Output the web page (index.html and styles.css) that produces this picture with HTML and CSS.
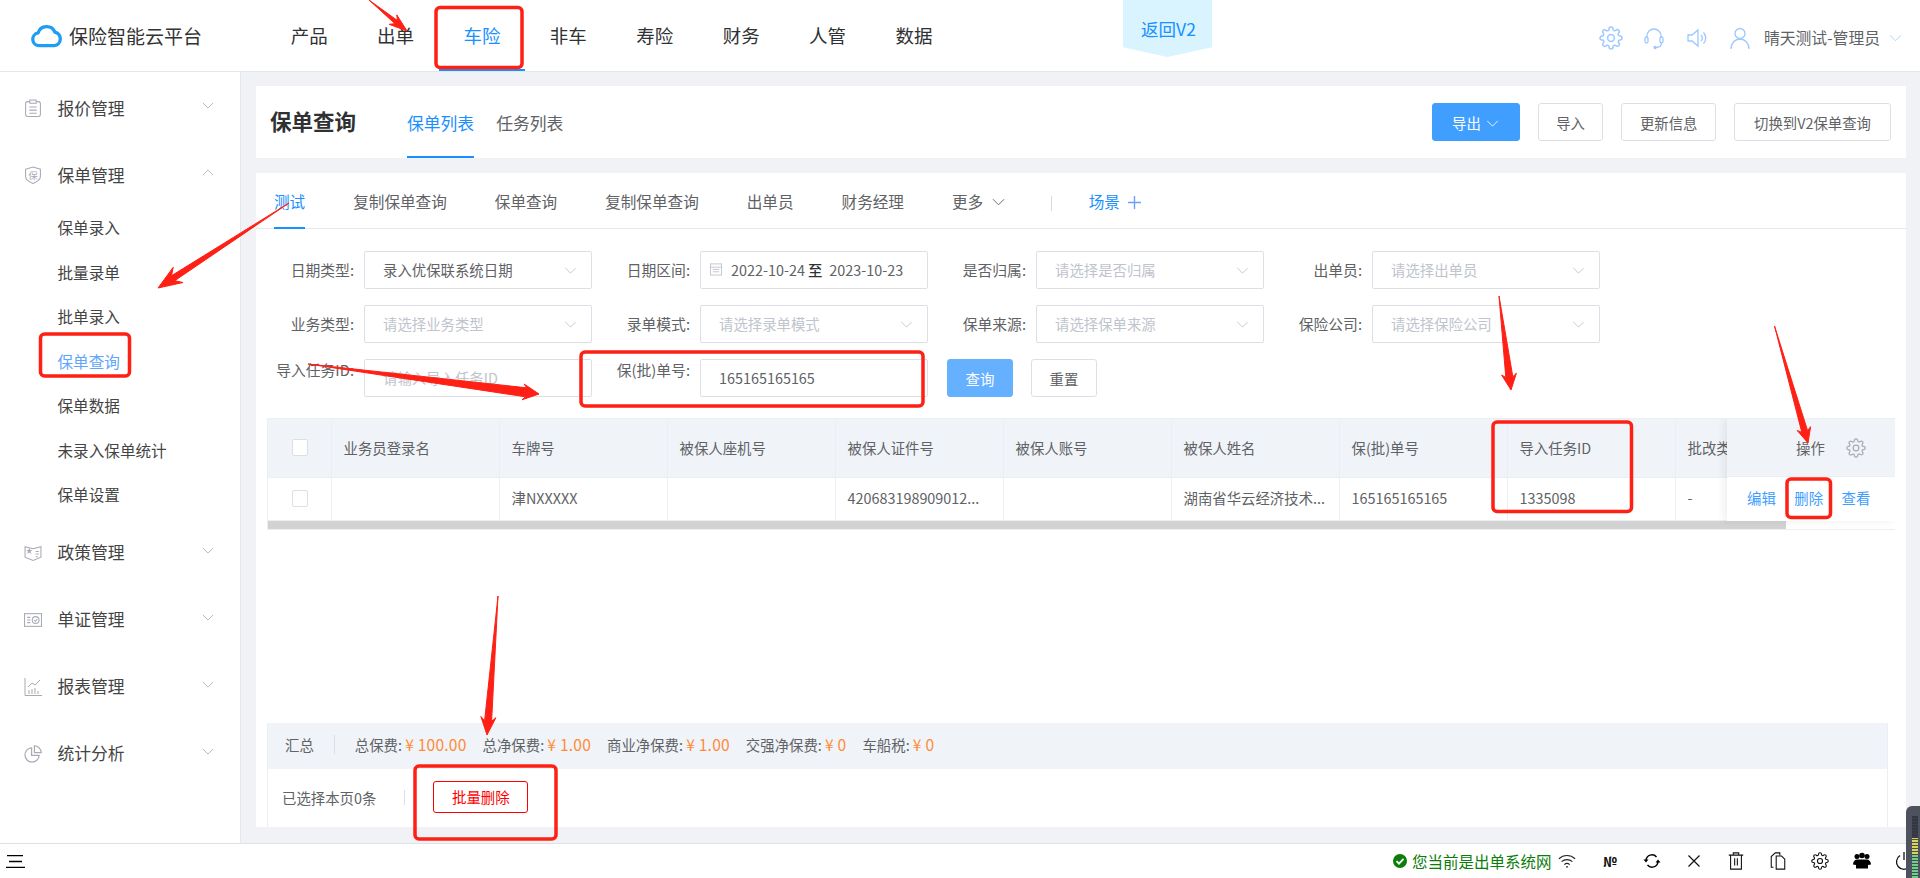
FILE: index.html
```html
<!DOCTYPE html>
<html lang="zh-CN">
<head>
  <meta charset="UTF-8">
  <title>保险智能云平台</title>
  <link rel="stylesheet" href="styles.css">
</head>
<body>
  <!-- shared icons -->
  <svg class="sprite" xmlns="http://www.w3.org/2000/svg">
    <symbol id="chev" viewBox="0 0 14 8"><polyline points="1,1 7,7 13,1" fill="none" stroke="currentColor"/></symbol>
    <symbol id="gear" viewBox="0 0 24 24"><g fill="none" stroke="currentColor" stroke-width="1.5"><circle cx="12" cy="12" r="3.4"/><path d="M19.4 15a1.65 1.65 0 0 0 .33 1.82l.06.06a2 2 0 0 1 0 2.83 2 2 0 0 1-2.83 0l-.06-.06a1.65 1.65 0 0 0-1.82-.33 1.65 1.65 0 0 0-1 1.51V21a2 2 0 0 1-2 2 2 2 0 0 1-2-2v-.09A1.65 1.65 0 0 0 9 19.4a1.65 1.65 0 0 0-1.82.33l-.06.06a2 2 0 0 1-2.83 0 2 2 0 0 1 0-2.83l.06-.06a1.65 1.65 0 0 0 .33-1.82 1.65 1.65 0 0 0-1.51-1H3a2 2 0 0 1-2-2 2 2 0 0 1 2-2h.09A1.65 1.65 0 0 0 4.6 9a1.65 1.65 0 0 0-.33-1.82l-.06-.06a2 2 0 0 1 0-2.83 2 2 0 0 1 2.83 0l.06.06a1.65 1.65 0 0 0 1.82.33H9a1.65 1.65 0 0 0 1-1.51V3a2 2 0 0 1 2-2 2 2 0 0 1 2 2v.09a1.65 1.65 0 0 0 1 1.51 1.65 1.65 0 0 0 1.82-.33l.06-.06a2 2 0 0 1 2.83 0 2 2 0 0 1 0 2.83l-.06.06a1.65 1.65 0 0 0-.33 1.82V9a1.65 1.65 0 0 0 1.51 1H21a2 2 0 0 1 2 2 2 2 0 0 1-2 2h-.09a1.65 1.65 0 0 0-1.51 1z"/></g></symbol>
  </svg>

  <!-- top nav -->
  <header class="topbar">
    <div class="logo">
      <svg class="logo-icon" viewBox="0 0 32 25"><path d="M8.5 23a6.6 6.6 0 0 1-1.2-13.1A9.2 9.2 0 0 1 24.6 9a7.1 7.1 0 0 1-.6 14z" fill="none" stroke="#1e9df5" stroke-width="3.4" stroke-linejoin="round"/></svg>
      <span>保险智能云平台</span>
    </div>
    <nav class="mainnav">
      <a href="#">产品</a>
      <a href="#">出单</a>
      <a href="#" class="active">车险</a>
      <a href="#">非车</a>
      <a href="#">寿险</a>
      <a href="#">财务</a>
      <a href="#">人管</a>
      <a href="#">数据</a>
    </nav>
    <a href="#" class="back-v2">返回V2</a>
    <div class="tools">
      <svg class="tool-icon"><use href="#gear"/></svg>
      <svg class="tool-icon" viewBox="0 0 24 24" fill="none" stroke="currentColor" stroke-width="1.3"><path d="M5 12V10a7 7 0 0 1 14 0v2"/><rect x="3" y="11" width="3" height="6" rx="1.5"/><rect x="18" y="11" width="3" height="6" rx="1.5"/><path d="M19.5 17c0 3-2.5 4.5-5.5 4.5"/><circle cx="13" cy="21.5" r="1" fill="currentColor"/></svg>
      <svg class="tool-icon" viewBox="0 0 24 24" fill="none" stroke="currentColor" stroke-width="1.3"><path d="M3 9h4l6-5v16l-6-5H3z"/><path d="M16 9a4 4 0 0 1 0 6"/><path d="M18.5 6.500a8 8 0 0 1 0 11"/></svg>
      <svg class="tool-icon" viewBox="0 0 24 24" fill="none" stroke="currentColor" stroke-width="1.3"><circle cx="12" cy="7.500" r="5"/><path d="M3 23c0-6 4-10 9-10s9 4 9 10"/></svg>
      <span class="user-name">晴天测试-管理员</span>
      <svg class="user-chev"><use href="#chev"/></svg>
    </div>
  </header>

  <div class="layout">
    <!-- left menu -->
    <aside class="sidebar">
      <a href="#" class="menu-title">
        <svg class="menu-icon" viewBox="0 0 16 17" fill="none" stroke="currentColor"><rect x="1" y="2.500" width="14" height="14" rx="2"/><rect x="5" y="1" width="6" height="3" fill="#fff"/><path d="M4.500 7.500h7M4.500 10.500h7M4.500 13.500h7"/></svg>
        <span>报价管理</span>
        <svg class="menu-chev"><use href="#chev"/></svg>
      </a>
      <a href="#" class="menu-title">
        <svg class="menu-icon" viewBox="0 0 16 17" fill="none" stroke="currentColor"><path d="M1 3l7-2 7 2v7c0 3-3 5-7 6.500C4 15 1 13 1 10z"/><text x="8" y="12" font-size="9" text-anchor="middle" fill="currentColor" stroke="none">保</text></svg>
        <span>保单管理</span>
        <svg class="menu-chev flip"><use href="#chev"/></svg>
      </a>
      <div class="submenu">
        <a href="#">保单录入</a>
        <a href="#">批量录单</a>
        <a href="#">批单录入</a>
        <a href="#" class="current">保单查询</a>
        <a href="#">保单数据</a>
        <a href="#">未录入保单统计</a>
        <a href="#">保单设置</a>
      </div>
      <a href="#" class="menu-title">
        <svg class="menu-icon" viewBox="0 0 17 16" fill="none" stroke="currentColor"><path d="M1 2l7.500 2L16 2v10l-7.500 3L1 12z"/><path d="M4 7.500l1-.6 1 .6-.4-1.100.9-.8H5.400L5 4.500l-.4 1.100H3.500l.9.8zM11 6.500h3M11 9h3M11 11.500h2"/></svg>
        <span>政策管理</span>
        <svg class="menu-chev"><use href="#chev"/></svg>
      </a>
      <a href="#" class="menu-title">
        <svg class="menu-icon" viewBox="0 0 17 13" fill="none" stroke="currentColor"><rect x=".5" y=".5" width="16" height="12"/><path d="M3 4h3M3 6.500h3M3 9h3"/><circle cx="11" cy="6.500" r="3.200"/><path d="M9.500 6.500l1.200 1.200 2-2"/></svg>
        <span>单证管理</span>
        <svg class="menu-chev"><use href="#chev"/></svg>
      </a>
      <a href="#" class="menu-title">
        <svg class="menu-icon" viewBox="0 0 18 18" fill="none" stroke="currentColor"><path d="M1 0v17.500h17"/><path d="M4 9l4-4 3 2 5-5"/><path d="M5 16v-4M8 16v-5M11 16v-6M14 16v-3"/></svg>
        <span>报表管理</span>
        <svg class="menu-chev"><use href="#chev"/></svg>
      </a>
      <a href="#" class="menu-title">
        <svg class="menu-icon" viewBox="0 0 19 19" fill="none" stroke="currentColor" stroke-width="1.300"><path d="M8 3a7.500 7.500 0 1 0 8 8H8z"/><path d="M11 .8a7.500 7.500 0 0 1 7.200 7.200H11z"/></svg>
        <span>统计分析</span>
        <svg class="menu-chev"><use href="#chev"/></svg>
      </a>
    </aside>

    <main class="content">
      <!-- title card -->
      <section class="title-card">
        <h1>保单查询</h1>
        <div class="page-tabs">
          <a href="#" class="active">保单列表</a>
          <a href="#">任务列表</a>
        </div>
        <div class="page-actions">
          <button class="btn btn-primary">导出 <svg class="btn-chev"><use href="#chev"/></svg></button>
          <button class="btn">导入</button>
          <button class="btn">更新信息</button>
          <button class="btn btn-wide">切换到V2保单查询</button>
        </div>
      </section>

      <section class="query-card">
        <!-- scene tabs -->
        <div class="scene-tabs">
          <a href="#" class="active">测试</a>
          <a href="#">复制保单查询</a>
          <a href="#">保单查询</a>
          <a href="#">复制保单查询</a>
          <a href="#">出单员</a>
          <a href="#">财务经理</a>
          <a href="#" class="more">更多 <svg class="more-chev"><use href="#chev"/></svg></a>
          <span class="scene-sep"></span>
          <a href="#" class="scene-add">场景<svg class="plus" viewBox="0 0 13 13" stroke="currentColor" stroke-width="1.400"><path d="M6.500 0v13M0 6.500h13"/></svg></a>
        </div>

        <!-- filters -->
        <div class="filters">
          <div class="field"><label>日期类型:</label><div class="control has-value">录入优保联系统日期<svg class="select-chev"><use href="#chev"/></svg></div></div>
          <div class="field"><label>日期区间:</label>
            <div class="control has-value date-range">
              <svg class="date-icon" viewBox="0 0 13 14" fill="none" stroke="currentColor"><rect x=".5" y="1.500" width="12" height="12"/><path d="M.5 5h12M3 7.500h7M3 10h7"/></svg>
              <span>2022-10-24</span><b>至</b><span>2023-10-23</span>
            </div>
          </div>
          <div class="field"><label>是否归属:</label><div class="control">请选择是否归属<svg class="select-chev"><use href="#chev"/></svg></div></div>
          <div class="field"><label>出单员:</label><div class="control">请选择出单员<svg class="select-chev"><use href="#chev"/></svg></div></div>

          <div class="field"><label>业务类型:</label><div class="control">请选择业务类型<svg class="select-chev"><use href="#chev"/></svg></div></div>
          <div class="field"><label>录单模式:</label><div class="control">请选择录单模式<svg class="select-chev"><use href="#chev"/></svg></div></div>
          <div class="field"><label>保单来源:</label><div class="control">请选择保单来源<svg class="select-chev"><use href="#chev"/></svg></div></div>
          <div class="field"><label>保险公司:</label><div class="control">请选择保险公司<svg class="select-chev"><use href="#chev"/></svg></div></div>

          <div class="field field-top"><label>导入任务ID:</label><div class="control">请输入导入任务ID</div></div>
          <div class="field field-top"><label>保(批)单号:</label><div class="control has-value">165165165165</div></div>
          <div class="field-buttons">
            <button class="btn btn-light">查询</button>
            <button class="btn">重置</button>
          </div>
        </div>

        <!-- result table -->
        <div class="table-wrap">
          <table class="result-table">
            <colgroup>
              <col class="col-check">
              <col span="9" class="col-data">
            </colgroup>
            <thead>
              <tr>
                <th><span class="checkbox"></span></th>
                <th>业务员登录名</th>
                <th>车牌号</th>
                <th>被保人座机号</th>
                <th>被保人证件号</th>
                <th>被保人账号</th>
                <th>被保人姓名</th>
                <th>保(批)单号</th>
                <th>导入任务ID</th>
                <th>批改类型</th>
              </tr>
            </thead>
            <tbody>
              <tr>
                <td><span class="checkbox"></span></td>
                <td></td>
                <td>津NXXXXX</td>
                <td></td>
                <td>420683198909012...</td>
                <td></td>
                <td>湖南省华云经济技术...</td>
                <td>165165165165</td>
                <td>1335098</td>
                <td>-</td>
              </tr>
            </tbody>
          </table>
          <div class="table-thumb"></div>
          <!-- fixed action column sits over the scrolled table -->
          <div class="fixed-col">
            <div class="fixed-head">操作<svg class="fixed-gear"><use href="#gear"/></svg></div>
            <div class="fixed-row"><a href="#">编辑</a><a href="#">删除</a><a href="#">查看</a></div>
          </div>
        </div>

        <!-- totals and batch bar -->
        <div class="table-foot">
          <div class="totals">
            <span class="totals-title">汇总</span>
            <span>总保费: <em>¥ 100.00</em></span>
            <span>总净保费: <em>¥ 1.00</em></span>
            <span>商业净保费: <em>¥ 1.00</em></span>
            <span>交强净保费: <em>¥ 0</em></span>
            <span>车船税: <em>¥ 0</em></span>
          </div>
          <div class="batch">
            <span class="batch-count">已选择本页0条</span>
            <button class="btn-danger">批量删除</button>
          </div>
        </div>
      </section>
    </main>
  </div>

  <!-- bottom status bar -->
  <footer class="statusbar">
    <svg class="burger" viewBox="0 0 19 13" stroke="#000" stroke-width="1.300"><path d="M1 .7h16M3 6.500h13M0 12.300h19"/></svg>
    <div class="status-right">
      <svg class="ok-icon" viewBox="0 0 14 14"><circle cx="7" cy="7" r="7" fill="#0a7d0a"/><path d="M3.500 7.200l2.500 2.400 4.500-4.800" fill="none" stroke="#fff" stroke-width="1.800"/></svg>
      <span class="status-text">您当前是出单系统网</span>
      <svg class="st-icon wifi" viewBox="0 0 20 16" fill="none" stroke="#222" stroke-width="1.200"><path d="M1 5.500a13 13 0 0 1 18 0M4 8.800a9 9 0 0 1 12 0M7 12a4.500 4.500 0 0 1 6 0"/><circle cx="10" cy="14.500" r="1" fill="#222" stroke="none"/></svg>
      <span class="st-icon st-no">№</span>
      <svg class="st-icon" viewBox="0 0 18 18" fill="none" stroke="#000" stroke-width="1.500"><path d="M3 8a6 6 0 0 1 10.500-3M15 10A6 6 0 0 1 4.500 13"/><path d="M.5 7.500h5L3 10.500zM17.500 10.500h-5L15 7.500z" fill="#000" stroke="none"/></svg>
      <svg class="st-icon" viewBox="0 0 18 18" stroke="#111" stroke-width="1.200"><path d="M3.500 3.500l11 11M14.500 3.500l-11 11"/></svg>
      <svg class="st-icon" viewBox="0 0 18 20" fill="none" stroke="#111" stroke-width="1.200"><path d="M1 3.500h16M6 3.500V1h6v2.500M3 3.500V19h12V3.500M7.500 7v8M10.500 7v8"/></svg>
      <svg class="st-icon" viewBox="0 0 18 20" fill="none" stroke="#111" stroke-width="1.200"><path d="M4 17H1.500V5L6 1h5v3"/><path d="M7 4.500h6l3.500 3.500v11H7z"/></svg>
      <svg class="st-icon st-gear"><use href="#gear"/></svg>
      <svg class="st-icon" viewBox="0 0 18 17" fill="#000"><circle cx="4" cy="4" r="2.500"/><circle cx="14" cy="4" r="2.500"/><circle cx="9" cy="3" r="2.800"/><path d="M0 12c0-3 2-5 4-5h10c2 0 4 2 4 5l-3 .5V16H3v-3.500z"/></svg>
      <svg class="st-icon" viewBox="0 0 18 18" fill="none" stroke="#111" stroke-width="1.300"><path d="M5 3.500a7.500 7.500 0 1 0 8 0M9 0v8"/></svg>
    </div>
  </footer>

  <!-- desktop level meter peeking in at the corner -->
  <div class="meter"><div class="meter-bars"></div></div>

  <!-- red review marks drawn over the screenshot -->
  <svg class="marks" viewBox="0 0 1920 878">
    <g fill="none" stroke="#fe2015" stroke-width="3.500">
      <rect x="436" y="7.500" width="86" height="60" rx="4"/>
      <rect x="40.500" y="334" width="89" height="42" rx="4"/>
      <rect x="581" y="352" width="342" height="54" rx="4"/>
      <rect x="1493" y="422" width="138.500" height="89.500" rx="4"/>
      <rect x="1787" y="479" width="43.500" height="38.500" rx="4"/>
      <rect x="415" y="766" width="141" height="73" rx="4"/>
    </g>
    <g fill="#fe2015" stroke="#fe2015">
      <polygon points="369,0 395,23.700 389.200,24.300 407,31 396.800,14.900 397.400,20.500"/>
      <polygon points="289,203 171.500,275.700 173.200,267.300 158,288 183,282.500 174.700,280.700"/>
      <polygon points="308,364 525.500,396.800 522,399.800 539,394 524.100,384 526.700,387.800"/>
      <polygon points="1499,296 1505.800,377.500 1501.600,375 1511,390 1516.400,373.200 1512.800,376.700"/>
      <polygon points="1774.500,326 1801.800,432.300 1797.200,430.500 1808,443 1810.600,426.700 1807.600,430.700"/>
      <polygon points="498,596 484.600,720.700 480.900,716.500 487,735 495.900,717.700 491.600,721.300"/>
    </g>
  </svg>
</body>
</html>
```

FILE: styles.css
```css
* {
  box-sizing: border-box;
}

html, body {
  margin: 0;
  height: 878px;
  overflow: hidden;
}

body {
  position: relative;
  display: flex;
  flex-direction: column;
  font-family: "Noto Sans CJK SC", "Liberation Sans", sans-serif;
  font-size: 14.4px;
  color: #606266;
  background: #f0f2f5;
}

a {
  color: inherit;
  text-decoration: none;
}

button {
  font-family: inherit;
  cursor: pointer;
}

.sprite {
  display: none;
}

/* top nav */
.topbar {
  position: relative;
  flex: none;
  height: 72px;
  display: flex;
  background: #fff;
  border-bottom: 1px solid #e4e7ed;
}

.logo {
  width: 266px;
  padding-left: 31px;
  display: flex;
  align-items: center;
  gap: 7px;
  font-size: 19px;
  color: #333;
}

.logo-icon {
  width: 31px;
  height: 25px;
}

.mainnav {
  display: flex;
}

.mainnav a {
  width: 86.4px;
  text-align: center;
  line-height: 71px;
  font-size: 18.5px;
  color: #303133;
}

.mainnav a.active {
  color: #1890ff;
  border-bottom: 2px solid #1890ff;
}

.back-v2 {
  position: absolute;
  left: 1123px;
  top: 0;
  width: 89px;
  height: 57px;
  padding: 16px 0 0 2px;
  text-align: center;
  font-size: 17.5px;
  line-height: 26px;
  color: #1890ff;
  background: #d9f4ff;
  clip-path: polygon(0 0, 100% 0, 100% 83%, 50% 100%, 0 83%);
}

.tools {
  margin-left: auto;
  padding: 4px 18px 0 0;
  display: flex;
  align-items: center;
}

.tool-icon {
  width: 24px;
  height: 24px;
  margin-right: 19px;
  color: #9cc8ff;
}

.tool-icon:nth-of-type(4) {
  margin-right: 12px;
}

.user-name {
  font-size: 15.8px;
  color: #606266;
}

.user-chev {
  width: 13px;
  height: 8px;
  margin-left: 9px;
  color: #a9cfff;
}

.layout {
  flex: 1;
  min-height: 0;
  display: flex;
}

/* left menu */
.sidebar {
  flex: none;
  width: 241px;
  padding-top: 2px;
  background: #fff;
  border-right: 1px solid #e4e7ed;
}

.menu-title {
  position: relative;
  height: 67px;
  padding-left: 57.5px;
  display: flex;
  align-items: center;
  font-size: 16.8px;
  color: #444;
}

.menu-icon {
  position: absolute;
  left: 24px;
  top: 25px;
  width: 18px;
  height: 18px;
  color: #a7abb4;
}

.menu-chev {
  position: absolute;
  left: 202px;
  top: 28px;
  width: 12px;
  height: 7px;
  color: #a9b0ba;
}

.menu-chev.flip {
  transform: rotate(180deg);
}

.submenu {
  margin: -3px 0 2px;
}

.submenu a {
  height: 44.5px;
  padding-left: 57.5px;
  display: flex;
  align-items: center;
  font-size: 15.6px;
  color: #444;
}

.submenu a.current {
  color: #5ea6ff;
}

/* main area */
.content {
  flex: 1;
  min-width: 0;
  padding: 14px 14px 16px 15px;
  display: flex;
  flex-direction: column;
  gap: 15px;
}

.title-card {
  flex: none;
  height: 72px;
  padding: 0 15px 0 14px;
  display: flex;
  align-items: stretch;
  background: #fff;
}

.title-card h1 {
  margin: 0 51px 0 0;
  font-size: 21.5px;
  line-height: 70px;
  color: #303133;
}

.page-tabs {
  display: flex;
  gap: 22px;
}

.page-tabs a {
  padding-top: 22px;
  font-size: 16.8px;
  line-height: 30px;
  color: #606266;
}

.page-tabs a.active {
  color: #1890ff;
  border-bottom: 2px solid #1890ff;
}

.page-actions {
  margin-left: auto;
  display: flex;
  align-items: center;
  gap: 18px;
}

.btn {
  height: 38px;
  padding: 0 17.5px;
  font-size: 14.4px;
  color: #606266;
  background: #fff;
  border: 1px solid #dcdfe6;
  border-radius: 3px;
}

.btn-wide {
  padding: 0 19px;
}

.btn-primary {
  width: 88px;
  padding: 0;
  color: #fff;
  background: #409eff;
  border-color: #409eff;
}

.btn-light {
  color: #fff;
  background: #66b1ff;
  border-color: #66b1ff;
}

.btn-chev {
  width: 13px;
  height: 7px;
  margin-left: 2px;
  vertical-align: 2px;
  color: #fff;
}

/* scene tabs */
.query-card {
  flex: 1;
  min-height: 0;
  display: flex;
  flex-direction: column;
  background: #fff;
}

.scene-tabs {
  flex: none;
  height: 56px;
  padding-left: 18px;
  display: flex;
  align-items: stretch;
  gap: 48px;
  font-size: 15.6px;
  border-bottom: 1px solid #e4e7ed;
}

.scene-tabs a {
  line-height: 57px;
}

.scene-tabs a.active {
  color: #1890ff;
  border-bottom: 2px solid #1890ff;
  height: 56px;
}

.more-chev {
  width: 13px;
  height: 8px;
  margin-left: 5px;
  vertical-align: 2px;
  color: #606266;
}

.scene-sep {
  width: 1px;
  height: 15px;
  margin: 23px 0 0 -2px;
  background: #d5d9e0;
}

.scene-tabs a.scene-add {
  color: #1890ff;
  margin-left: -11px;
}

.plus {
  width: 13px;
  height: 13px;
  margin-left: 8px;
  vertical-align: -1px;
  color: #6d9eff;
}

/* filters */
.filters {
  flex: none;
  padding-top: 22px;
  display: grid;
  grid-template-columns: repeat(4, 336px);
  grid-auto-rows: 38px;
  row-gap: 16px;
}

.field {
  display: flex;
  align-items: center;
}

.field label {
  width: 98px;
  margin-right: 10px;
  padding-bottom: 2px;
  flex: none;
  font-size: 14.8px;
  text-align: right;
  color: #606266;
  white-space: nowrap;
}

.field-top label {
  align-self: flex-start;
  padding-bottom: 0;
  line-height: 22px;
}

.control {
  position: relative;
  width: 228px;
  height: 38px;
  padding: 0 0 2px 18px;
  display: flex;
  align-items: center;
  color: #c0c4cc;
  border: 1px solid #dcdfe6;
  border-radius: 2px;
}

.control.has-value {
  color: #606266;
}

.select-chev {
  position: absolute;
  right: 14px;
  top: 15px;
  width: 13px;
  height: 7px;
  color: #c0c4cc;
}

.date-range {
  padding-left: 9px;
}

.date-icon {
  width: 12px;
  height: 14px;
  margin-right: 9px;
  color: #c0c4cc;
}

.date-range b {
  margin: 0 7px 0 3px;
  font-weight: 500;
  color: #303133;
}

.field-buttons {
  padding-left: 19px;
  display: flex;
  gap: 18px;
}

.field-buttons .btn {
  width: 66px;
  padding: 0;
}

/* table */
.table-wrap {
  position: relative;
  flex: none;
  width: 1628px;
  height: 112px;
  margin: 21px 0 0 11px;
  overflow: hidden;
  border: 1px solid #ebeef5;
  border-right: 0;
}

.result-table {
  width: 1575px;
  table-layout: fixed;
  border-collapse: collapse;
}

.col-check {
  width: 63px;
}

.col-data {
  width: 168px;
}

.result-table th,
.result-table td {
  padding: 0 12px;
  text-align: left;
  font-weight: 400;
  color: #606266;
  white-space: nowrap;
  overflow: hidden;
  border-right: 1px solid #ebeef5;
  border-bottom: 1px solid #ebeef5;
}

.result-table th {
  height: 58px;
  background: #f0f4f9;
}

.result-table td {
  height: 43px;
  padding-bottom: 2px;
}

.result-table th:first-child,
.result-table td:first-child {
  padding: 0 0 0 24px;
}

.checkbox {
  display: block;
  width: 16px;
  height: 17px;
  background: #fff;
  border: 1px solid #dcdfe6;
  border-radius: 2px;
}

.table-thumb {
  width: 1518px;
  height: 9px;
  background: #d2d2d2;
}

.fixed-col {
  position: absolute;
  right: 0;
  top: 0;
  width: 168px;
  height: 102px;
  background: #fff;
  box-shadow: -3px 0 8px rgba(0, 0, 0, .07);
}

.fixed-head {
  position: relative;
  height: 58px;
  line-height: 58px;
  padding-left: 69px;
  background: #f0f4f9;
  border-bottom: 1px solid #ebeef5;
}

.fixed-gear {
  position: absolute;
  left: 119px;
  top: 19px;
  width: 20px;
  height: 20px;
  color: #a7abb4;
}

.fixed-row {
  height: 43px;
  padding: 0 0 2px 20px;
  display: flex;
  align-items: center;
  gap: 18.5px;
  color: #409eff;
}

/* totals */
.table-foot {
  margin: auto 18px 0 11px;
  border-left: 1px solid #ebeef5;
  border-right: 1px solid #ebeef5;
}

.totals {
  height: 46px;
  padding: 0 0 4px 17px;
  display: flex;
  align-items: center;
  gap: 16px;
  background: #f0f4f9;
}

.totals em {
  font-style: normal;
  font-size: 15.6px;
  letter-spacing: .2px;
  color: #ff8c3a;
}

.totals-title {
  padding-right: 20px;
  margin-right: 4px;
  border-right: 1px solid #dcdfe6;
  line-height: 19px;
}

.batch {
  height: 58px;
  padding: 0 0 2px 14px;
  display: flex;
  align-items: center;
}

.batch-count {
  padding-right: 28px;
  border-right: 1px solid #dcdfe6;
  line-height: 15px;
}

.btn-danger {
  width: 95px;
  height: 32px;
  margin-left: 28px;
  padding-bottom: 3px;
  font-size: 14.4px;
  color: #f00;
  background: #fff;
  border: 1px solid #f00;
  border-radius: 3px;
}

/* status bar */
.statusbar {
  flex: none;
  height: 35px;
  padding: 0 7px 0 6px;
  display: flex;
  align-items: center;
  background: #fff;
  border-top: 1px solid #dfe1e5;
}

.burger {
  width: 19px;
  height: 13px;
}

.status-right {
  margin-left: auto;
  display: flex;
  align-items: center;
}

.ok-icon {
  width: 14px;
  height: 14px;
  margin-right: 5px;
}

.status-text {
  width: 140px;
  font-size: 15.5px;
  color: #0a7d0a;
  white-space: nowrap;
}

.st-icon {
  flex: none;
  width: 18px;
  height: 18px;
  margin-left: 24px;
  color: #111;
}

.wifi {
  margin-left: 6px;
  margin-right: 0;
}

.st-no {
  width: 18px;
  height: auto;
  margin-left: 25px;
  font-size: 13px;
  font-weight: 700;
  text-align: center;
}

.meter {
  position: absolute;
  right: 0;
  bottom: 0;
  width: 14px;
  height: 72px;
  padding: 10px 2px 0 6px;
  background: #4d525e;
  border-top-left-radius: 6px;
}

.meter-bars {
  height: 62px;
  background:
    repeating-linear-gradient(to bottom, transparent 0 2px, rgba(60, 64, 74, .9) 2px 3px),
    linear-gradient(to bottom, #333742 0 22px, #d8d45c 22px 38px, #6fcf8a 38px 100%);
}

/* review marks */
.marks {
  position: absolute;
  left: 0;
  top: 0;
  width: 1920px;
  height: 878px;
  pointer-events: none;
}
```
